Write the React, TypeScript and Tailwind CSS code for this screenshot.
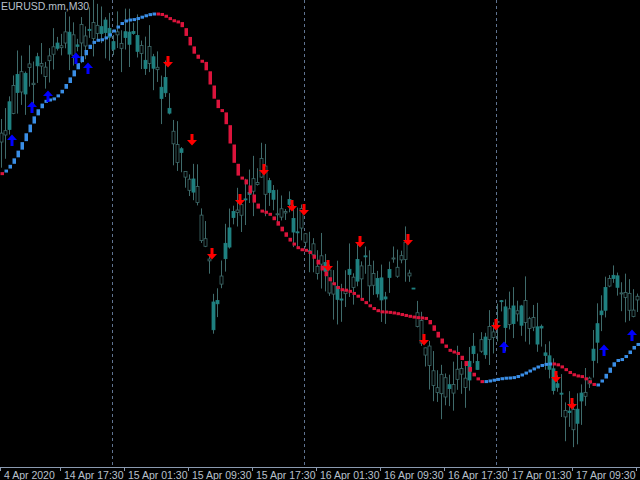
import React from 'react';

const W = 640;
const H = 467;

// rough price path (close, in pixels) and smoothed line keypoints
const pricePts: [number, number][] = [
  [0, 140], [20, 85], [40, 70], [60, 45], [100, 35], [125, 35], [150, 58], [165, 90], [180, 160],
  [195, 190], [205, 240], [215, 320], [225, 250], [240, 205], [260, 170], [275, 205], [300, 220],
  [320, 270], [340, 295], [360, 265], [380, 290], [405, 255], [420, 330], [440, 385], [460, 380],
  [480, 355], [500, 315], [520, 310], [540, 335], [555, 385], [572, 425], [590, 380], [600, 320],
  [612, 280], [625, 300], [640, 310],
];
const maPts: [number, number][] = [
  [0, 174], [50, 100], [100, 40], [130, 20], [155, 14], [175, 22], [200, 62], [220, 112],
  [240, 180], [260, 212], [300, 250], [340, 290], [380, 312], [420, 318], [450, 352], [480, 382],
  [510, 378], [550, 364], [575, 376], [595, 386], [620, 360], [640, 344],
];

function interp(pts: [number, number][], x: number) {
  for (let i = 1; i < pts.length; i++) {
    if (x <= pts[i][0]) {
      const [x0, y0] = pts[i - 1];
      const [x1, y1] = pts[i];
      const t = (x - x0) / (x1 - x0);
      const s = t * t * (3 - 2 * t);
      return y0 + (y1 - y0) * s;
    }
  }
  return pts[pts.length - 1][1];
}

let seed = 7;
const rnd = () => {
  seed = (seed * 1103515245 + 12345) % 2147483648;
  return seed / 2147483648;
};

const candles = Array.from({ length: 160 }, (_, i) => {
  const x = i * 4 + 1.5;
  const base = interp(pricePts, x);
  const o = base + (rnd() - 0.5) * 30;
  const c = base + (rnd() - 0.5) * 30;
  const hi = Math.min(o, c) - rnd() * 26;
  const lo = Math.max(o, c) + rnd() * 26;
  return { x, o, c, hi, lo };
});

const ma = Array.from({ length: 160 }, (_, i) => {
  const x = i * 4 + 2;
  const y = interp(maPts, x);
  const prev = interp(maPts, x - 4);
  return { x, y, prev, up: y <= prev };
});

const downArrows: [number, number][] = [
  [168, 62], [192, 140], [212, 254], [240, 200], [264, 170], [292, 206], [304, 210], [328, 266],
  [360, 242], [408, 240], [424, 340], [496, 325], [556, 377], [572, 404],
];
const upArrows: [number, number][] = [
  [12, 140], [32, 107], [48, 96], [76, 58], [88, 68], [504, 347], [604, 350], [632, 335],
];

const labels = [
  [0, '4 Apr 2020'], [60, '14 Apr 17:30'], [124, '15 Apr 01:30'], [188, '15 Apr 09:30'],
  [252, '15 Apr 17:30'], [316, '16 Apr 01:30'], [380, '16 Apr 09:30'], [444, '16 Apr 17:30'],
  [508, '17 Apr 01:30'], [572, '17 Apr 09:30'], [636, '1'],
] as const;

export default function App() {
  return (
    <div className="relative w-[640px] h-[480px] bg-black overflow-hidden" style={{ fontFamily: '"Liberation Sans", Arial, sans-serif' }}>
      <svg width={W} height={480} className="block">
        {[112, 304, 496].map((x) => (
          <line key={x} x1={x + 0.5} y1={0} x2={x + 0.5} y2={H} stroke="#5f7390" strokeDasharray="3 3" />
        ))}
        {candles.map((k, i) => {
          const bear = k.c > k.o;
          const top = Math.min(k.o, k.c);
          const h = Math.max(1, Math.abs(k.c - k.o));
          return (
            <g key={i}>
              <line x1={k.x} y1={k.hi} x2={k.x} y2={k.lo} stroke="#3f6b6b" />
              <rect x={k.x - 1.5} y={top} width={3} height={h} fill={bear ? '#1f8080' : '#000'} stroke={bear ? '#1f8080' : '#3f6b6b'} strokeWidth={0.8} />
            </g>
          );
        })}
        {ma.map((p, i) => {
          const top = Math.min(p.y, p.prev) - 1.5;
          const h = Math.max(3, Math.abs(p.y - p.prev) - 1);
          return <rect key={i} x={p.x - 1.5} y={top} width={3.5} height={h} fill={p.up ? '#3a8ee6' : '#dc143c'} />;
        })}
        {downArrows.map(([x, y], i) => (
          <path key={i} d={`M${x - 1.5} ${y - 6}h3v6h3.5l-5 5.5l-5 -5.5h3.5z`} fill="#ff0000" />
        ))}
        {upArrows.map(([x, y], i) => (
          <path key={i} d={`M${x - 1.5} ${y + 6}h3v-6h3.5l-5 -5.5l-5 5.5h3.5z`} fill="#0000ff" />
        ))}
        <line x1={0} y1={H + 0.5} x2={W} y2={H + 0.5} stroke="#8a9ab0" />
        {labels.map(([x]) => (
          <line key={x} x1={x + 0.5} y1={H} x2={x + 0.5} y2={H + 4} stroke="#8a9ab0" />
        ))}
        {labels.map(([x, t]) => (
          <text key={t} x={x + 4} y={479} fill="#b8c0cc" fontSize={10.5}>{t}</text>
        ))}
        <text x={1} y={10} fill="#b8c0cc" fontSize={10.5}>EURUSD.mm,M30</text>
      </svg>
    </div>
  );
}
